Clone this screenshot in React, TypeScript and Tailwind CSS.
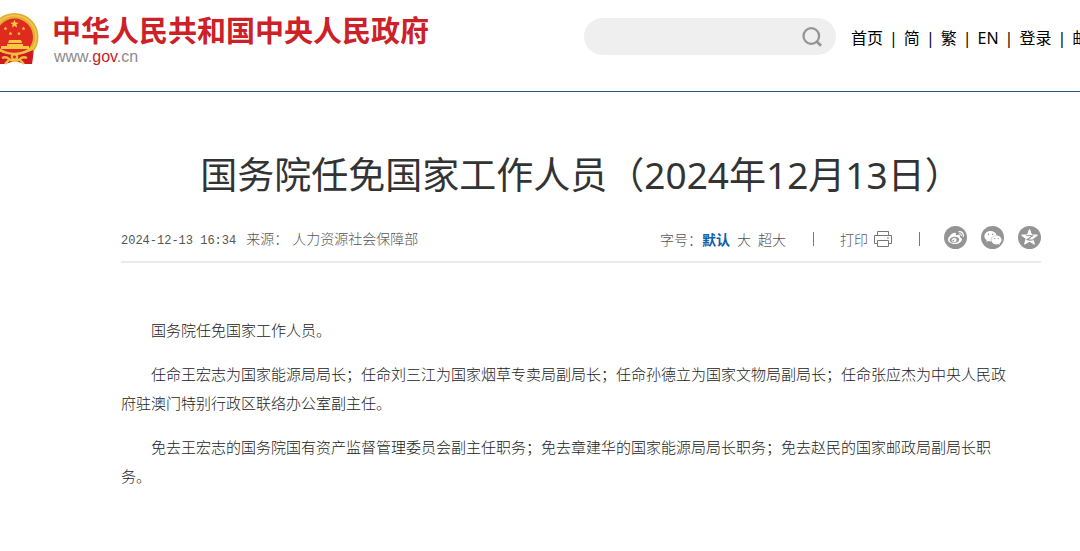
import { useState } from "react";
import { FaWeibo, FaWeixin } from "react-icons/fa";

const navLinks = ["首页", "简", "繁", "EN", "登录", "邮箱"];
const fontSizes = ["默认", "大", "超大"];

const paragraphs = [
  "国务院任免国家工作人员。",
  "任命王宏志为国家能源局局长；任命刘三江为国家烟草专卖局副局长；任命孙德立为国家文物局副局长；任命张应杰为中央人民政府驻澳门特别行政区联络办公室副主任。",
  "免去王宏志的国务院国有资产监督管理委员会副主任职务；免去章建华的国家能源局局长职务；免去赵民的国家邮政局副局长职务。",
];

const star = "0,-10 2.6,-3.2 9.8,-3 4.2,1.4 6.2,8.4 0,4.4 -6.2,8.4 -4.2,1.4 -9.8,-3 -2.6,-3.2";

function Emblem() {
  return (
    <svg viewBox="8 0 39 52" className="h-[52px] w-[39px] shrink-0" aria-hidden="true">
      <path d="M5 36 L1 51 L13 51 L23 48 L33 51 L40 51 L42 36 Z" fill="#c8181d" />
      <circle cx="22.5" cy="24" r="24" fill="#e3ad35" />
      <circle cx="22.5" cy="24" r="21.5" fill="none" stroke="#f0c850" strokeWidth="1.5" />
      <circle cx="22.5" cy="24" r="18.5" fill="#df2a20" />
      <g fill="#f6c744">
        <polygon points={star} transform="translate(22.5 11) scale(.43)" />
        <polygon points={star} transform="translate(13.5 15.5) scale(.2)" />
        <polygon points={star} transform="translate(31.5 15.5) scale(.2)" />
        <polygon points={star} transform="translate(18.5 20.5) scale(.2)" />
        <polygon points={star} transform="translate(27 20.5) scale(.2)" />
        <path d="M17 27 H29 L30 30 H16 Z M15 31 H31 V33 H37 V36 H9 V33 H15 Z" />
      </g>
      <path d="M4 37 Q22.5 46 41 37 L40 50 L32 51 L28 46 H18 L14 51 L6 50 Z" fill="#cf1b1d" />
      <g fill="none" stroke="#efbd42" strokeWidth="2.4">
        <path d="M4 34 Q12 41 22.5 41 Q33 41 41 34" />
        <circle cx="22.5" cy="44" r="2.6" />
        <path d="M10 45 Q14 43 17 46 Q19 48 22.5 48 Q26 48 28 46 Q31 43 35 45" />
        <path d="M13 51 L17 47 M32 51 L28 47" />
      </g>
    </svg>
  );
}

function SearchIcon() {
  return (
    <svg viewBox="0 0 20 20" className="size-5" fill="none" stroke="#959595" strokeWidth="2.3" aria-hidden="true">
      <circle cx="9.3" cy="9" r="7.8" />
      <path d="M14.7 14.5 L19 18.8" strokeWidth="2.8" />
    </svg>
  );
}

function PrinterIcon() {
  return (
    <svg viewBox="0 0 18 18" className="size-[18px]" fill="none" stroke="#777" aria-hidden="true">
      <path d="M3.5 5.5 V1.5 H14.5 V5.5 M3.5 13.5 H.5 V5.5 H17.5 V13.5 H14.5" />
      <path d="M3.5 10.5 H14.5 V16.5 H3.5 Z M13 8 H15" />
    </svg>
  );
}

function QzoneIcon() {
  return (
    <svg viewBox="-11 -11 22 22" className="size-[17px]" aria-hidden="true">
      <polygon points={star} fill="#fff" stroke="#fff" strokeWidth="1.5" strokeLinejoin="round" />
      <path d="M-4 -2.2 Q0 -3 3.8 -2.2 L-3 2.8 Q1 4 6 2.6" fill="none" stroke="#949494" strokeWidth="1.5" />
    </svg>
  );
}

function Header() {
  return (
    <header className="flex h-[92px] items-start overflow-hidden border-b border-[#2d5686] whitespace-nowrap">
      <a href="#" className="flex shrink-0 gap-[13px] pt-[13px]">
        <Emblem />
        <span className="block">
          <span className="block text-[29px] leading-9 font-bold text-[#cd2027]">中华人民共和国中央人民政府</span>
          <span className="block pl-0.5 font-['Liberation_Sans',sans-serif] text-base leading-4 text-[#8b8b8b]">
            www.<span className="text-[#cd2027]">gov</span>.cn
          </span>
        </span>
      </a>
      <form
        className="mt-[18px] ml-[155px] flex h-[37px] w-[252px] shrink-0 items-center rounded-full bg-[#efefef] pr-3.5 pl-4"
        onSubmit={(event) => event.preventDefault()}
      >
        <input type="search" aria-label="搜索" className="min-w-0 flex-1 bg-transparent text-sm outline-none" />
        <button type="submit" aria-label="搜索">
          <SearchIcon />
        </button>
      </form>
      <nav className="mt-[26px] ml-[15px] flex shrink-0 gap-1.5 text-base leading-6 text-black">
        {navLinks.map((label, i) => (
          <span key={label} className="flex gap-1.5">
            {i > 0 && <span aria-hidden="true">|</span>}
            <a href="#">{label}</a>
          </span>
        ))}
      </nav>
    </header>
  );
}

function Toolbar() {
  const [size, setSize] = useState("默认");

  return (
    <div className="flex items-center">
      <span>字号：</span>
      <div className="flex gap-[7px]">
        {fontSizes.map((label) => (
          <button
            key={label}
            type="button"
            onClick={() => setSize(label)}
            className={size === label ? "font-bold text-[#0b5ea8]" : ""}
          >
            {label}
          </button>
        ))}
      </div>
      <span className="ml-[27px] h-3.5 w-px bg-[#777]" />
      <button type="button" className="ml-[26px] flex items-center gap-1.5">
        打印
        <PrinterIcon />
      </button>
      <span className="ml-[27px] h-3.5 w-px bg-[#777]" />
      <div className="mb-0.5 ml-6 flex gap-3.5 text-white">
        <a href="#" aria-label="微博" className="flex size-[23px] items-center justify-center rounded-full bg-[#949494]">
          <FaWeibo className="size-4" />
        </a>
        <a href="#" aria-label="微信" className="flex size-[23px] items-center justify-center rounded-full bg-[#949494]">
          <FaWeixin className="size-[18px]" />
        </a>
        <a href="#" aria-label="QQ空间" className="flex size-[23px] items-center justify-center rounded-full bg-[#949494]">
          <QzoneIcon />
        </a>
      </div>
    </div>
  );
}

export default function App() {
  return (
    <div lang="zh-CN" className="min-h-screen bg-white font-['Noto_Sans','Noto_Sans_CJK_SC',sans-serif]">
      <Header />
      <main className="mr-[39px] ml-[121px] pt-[58px]">
        <h1 className="text-center text-[37px] leading-[50px] text-[#333]">国务院任免国家工作人员（2024年12月13日）</h1>
        <div className="mt-[26px] flex items-center justify-between border-b-2 border-[#ebebeb] pb-2.5 font-['Noto_Sans_CJK_SC',sans-serif] text-sm font-light text-[#555]">
          <div className="flex items-baseline">
            <time className="font-['Liberation_Mono',monospace] text-xs">2024-12-13 16:34</time>
            <span className="ml-2.5">来源：</span>
            <span className="ml-1">人力资源社会保障部</span>
          </div>
          <Toolbar />
        </div>
        <article className="mt-[52px] space-y-[15px] pr-8 font-['Noto_Sans_CJK_SC',sans-serif] text-[15px] leading-[29px] font-light text-[#222]">
          {paragraphs.map((text) => (
            <p key={text} className="indent-[2em]">
              {text}
            </p>
          ))}
        </article>
      </main>
    </div>
  );
}
